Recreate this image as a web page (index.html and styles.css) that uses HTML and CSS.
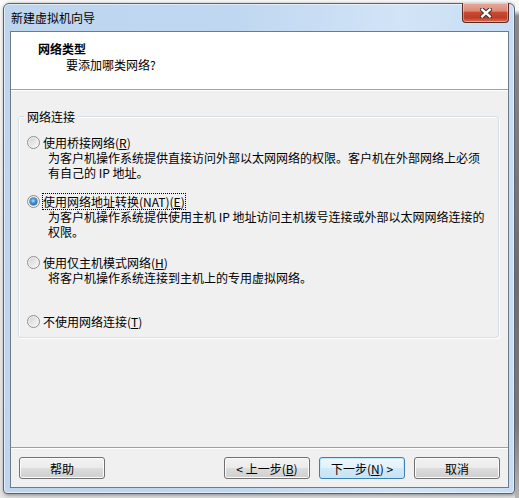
FILE: index.html
```html
<!DOCTYPE html>
<html lang="zh-CN">
<head>
<meta charset="utf-8">
<title>新建虚拟机向导</title>
<link rel="stylesheet" href="styles.css">
</head>
<body>
<div class="desktop">
  <div class="window">
    <div class="titlebar">
      <span class="title">新建虚拟机向导</span>
      <button class="close" aria-label="关闭">
        <svg width="12" height="10" viewBox="0 0 12 10">
          <path d="M2.2 1.6 L9.8 8.4 M9.8 1.6 L2.2 8.4" stroke="#3b2b2a" stroke-width="4.4" stroke-linecap="square" fill="none"/>
          <path d="M2.2 1.6 L9.8 8.4 M9.8 1.6 L2.2 8.4" stroke="#ffffff" stroke-width="2.4" stroke-linecap="square" fill="none"/>
        </svg>
      </button>
    </div>
    <div class="client">
      <div class="header">
        <div class="h-title">网络类型</div>
        <div class="h-sub">要添加哪类网络?</div>
      </div>
      <div class="body">
        <div class="group">
          <div class="group-title">网络连接</div>
          <div class="options">
            <div class="option o1">
              <div class="opt-row"><span class="radio"></span><span class="opt-label">使用桥接网络(<u>R</u>)</span></div>
              <div class="desc">为客户机操作系统提供直接访问外部以太网网络的权限。客户机在外部网络上必须<br>有自己的 IP 地址。</div>
            </div>
            <div class="option o2">
              <div class="opt-row"><span class="radio checked"></span><span class="opt-label focus">使用网络地址转换(NAT)(<u>E</u>)</span></div>
              <div class="desc">为客户机操作系统提供使用主机 IP 地址访问主机拨号连接或外部以太网网络连接的<br>权限。</div>
            </div>
            <div class="option o3">
              <div class="opt-row"><span class="radio"></span><span class="opt-label">使用仅主机模式网络(<u>H</u>)</span></div>
              <div class="desc">将客户机操作系统连接到主机上的专用虚拟网络。</div>
            </div>
            <div class="option o4">
              <div class="opt-row"><span class="radio"></span><span class="opt-label">不使用网络连接(<u>T</u>)</span></div>
            </div>
          </div>
        </div>
        <div class="footer">
          <button class="btn help">帮助</button>
          <button class="btn">&lt; 上一步(<u>B</u>)</button>
          <button class="btn default">下一步(<u>N</u>) &gt;</button>
          <button class="btn">取消</button>
        </div>
      </div>
    </div>
  </div>
  <div class="strip"></div>
</div>
</body>
</html>
```

FILE: styles.css
```css
* { box-sizing: border-box; }
html, body { margin: 0; padding: 0; }
body {
  font-family: "Noto Sans CJK SC", "Microsoft YaHei", sans-serif;
  font-size: 12px;
  color: #000;
}
.desktop {
  width: 519px;
  height: 498px;
  display: flex;
  align-items: flex-start;
  padding: 3px 0 0 3px;
  background: linear-gradient(#fbfbfb, #e4e4e4);
  overflow: hidden;
}
.window {
  width: 512px;
  height: 491px;
  border: 1px solid #58636f;
  border-radius: 6px 6px 4px 4px;
  padding: 0 5px 5px 6px;
  display: flex;
  flex-direction: column;
  background: linear-gradient(90deg, #bed5ee 0%, #bfd7f1 45%, #d2e4f7 78%, #c7ddf3 100%);
  box-shadow: inset 0 0 0 1px rgba(255,255,255,0.55), 1px 1px 4px rgba(0,0,0,0.45);
}
.titlebar {
  height: 27px;
  display: flex;
  align-items: center;
  padding-left: 1px;
}
.title {
  line-height: 16px;
  margin-top: 1px;
}
.close {
  margin-left: auto;
  align-self: flex-start;
  margin-top: -1px;
  width: 47px;
  height: 20px;
  padding: 0;
  border: 1px solid #5b2a22;
  border-top: none;
  border-radius: 0 0 4px 4px;
  background: linear-gradient(#e8ab9d 0%, #dc8a77 42%, #c84a32 50%, #bf3b27 78%, #d9735d 100%);
  box-shadow: inset 0 0 0 1px rgba(255,255,255,0.35);
  display: flex;
  align-items: center;
  justify-content: center;
}
.client {
  height: 457px;
  border: 1px solid #6d7a88;
  display: flex;
  flex-direction: column;
  background: #f0f0f0;
}
.header {
  height: 58px;
  background: #fff;
  border-bottom: 1px solid #a0a0a0;
  padding: 9px 0 0 27px;
}
.h-title {
  font-weight: bold;
  line-height: 16px;
}
.h-sub {
  line-height: 16px;
  padding-left: 28px;
}
.body {
  flex: 1;
  display: flex;
  flex-direction: column;
  border-top: 1px solid #ffffff;
}
.group {
  margin: 25px 9px 0 7px;
  border: 1px solid #d5dfe5;
  border-radius: 3px;
  box-shadow: inset 1px 1px 0 #fff, 1px 1px 0 #fff;
  padding-bottom: 8px;
}
.group-title {
  display: block;
  width: fit-content;
  margin: -8px 0 0 5px;
  padding: 0 3px;
  line-height: 16px;
  background: #f0f0f0;
}
.options {
  padding: 10px 0 0 8px;
}
.option { line-height: 15px; }
.o2 { margin-top: 14px; }
.o3 { margin-top: 16px; }
.o4 { margin-top: 29px; }
.opt-row {
  display: flex;
  align-items: center;
  height: 15px;
}
.opt-label {
  margin-left: 3px;
  white-space: nowrap;
}
.opt-label.focus {
  outline: 1px dotted #000;
  outline-offset: 0;
}
.desc {
  padding-left: 21px;
  white-space: nowrap;
}
.radio {
  width: 13px;
  height: 13px;
  flex: none;
  border-radius: 50%;
  border: 1px solid #8c8e90;
  background: linear-gradient(135deg, #cdcdcd 0%, #e6e6e6 50%, #f8f8f8 100%);
  box-shadow: inset 0 0 0 1px #f6f6f6;
  display: grid;
  place-items: center;
}
.radio.checked::after {
  content: "";
  width: 7px;
  height: 7px;
  border-radius: 50%;
  background: radial-gradient(circle at 45% 40%, #b9e4ff 0, #3f97df 40%, #0d417f 100%);
  box-shadow: 0 0 0 0.5px #1b4c82;
}
.footer {
  margin-top: auto;
  border-top: 1px solid #a0a0a0;
  box-shadow: inset 0 1px 0 #fff;
  padding: 9px 8px 8px 8px;
  display: flex;
  gap: 9px;
}
.btn {
  width: 86px;
  height: 22px;
  padding: 1px 0 0 0;
  border: 1px solid #707070;
  border-radius: 3px;
  background: linear-gradient(#f2f2f2 0%, #ebebeb 50%, #dddddd 50%, #cfcfcf 100%);
  box-shadow: inset 0 0 0 1px #fbfbfb;
  font-family: "Noto Sans CJK SC", "Microsoft YaHei", sans-serif;
  font-size: 12px;
  line-height: 18px;
  color: #000;
}
.btn.help { margin-right: auto; }
.btn.default {
  border-color: #3c7fb1;
  background: linear-gradient(#eef7fd 0%, #e2f1fb 50%, #d2e9f8 50%, #c6e3f6 100%);
  box-shadow: inset 0 0 0 1px #c4e8fb;
}
.strip {
  width: 4px;
  height: 498px;
  margin-top: -3px;
  background: linear-gradient(#f6f6f6 0, #f6f6f6 10px, #8a8a8a 16px, #6e6e6e 55%, #7a7a7a 85%, #b5b5b5 100%);
}
```
